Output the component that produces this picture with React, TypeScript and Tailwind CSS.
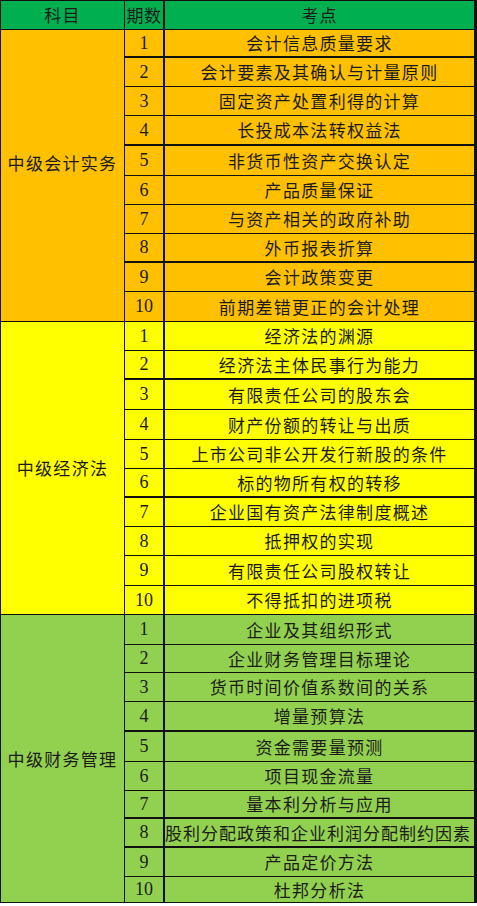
import React from "react";

type Section = {
  label: string;
  bg: string;
  labelPad: string;
  rows: string[];
  heights: number[];
  thick: number[];
  leftAlign?: number[];
};

const H: Record<number, string> = {
  25: "h-[25px]",
  26: "h-[26px]",
  27: "h-[27px]",
  28: "h-[28px]",
  29: "h-[29px]",
  30: "h-[30px]",
};

const sections: Section[] = [
  {
    label: "中级会计实务",
    bg: "bg-[#ffc000]",
    labelPad: "pb-[26px]",
    rows: [
      "会计信息质量要求",
      "会计要素及其确认与计量原则",
      "固定资产处置利得的计算",
      "长投成本法转权益法",
      "非货币性资产交换认定",
      "产品质量保证",
      "与资产相关的政府补助",
      "外币报表折算",
      "会计政策变更",
      "前期差错更正的会计处理",
    ],
    heights: [28, 29, 29, 30, 30, 29, 29, 29, 29, 29],
    thick: [0, 3, 7],
  },
  {
    label: "中级经济法",
    bg: "bg-[#ffff00]",
    labelPad: "pb-0",
    rows: [
      "经济法的渊源",
      "经济法主体民事行为能力",
      "有限责任公司的股东会",
      "财产份额的转让与出质",
      "上市公司非公开发行新股的条件",
      "标的物所有权的转移",
      "企业国有资产法律制度概述",
      "抵押权的实现",
      "有限责任公司股权转让",
      "不得抵扣的进项税",
    ],
    heights: [29, 29, 30, 30, 29, 29, 29, 29, 30, 28],
    thick: [1, 5],
  },
  {
    label: "中级财务管理",
    bg: "bg-[#92d050]",
    labelPad: "pb-0",
    rows: [
      "企业及其组织形式",
      "企业财务管理目标理论",
      "货币时间价值系数间的关系",
      "增量预算法",
      "资金需要量预测",
      "项目现金流量",
      "量本利分析与应用",
      "股利分配政策和企业利润分配制约因素",
      "产品定价方法",
      "杜邦分析法",
    ],
    heights: [30, 28, 29, 30, 30, 29, 28, 29, 29, 25],
    thick: [3, 6, 7],
    leftAlign: [7],
  },
];

const cjk = "font-['Noto_Sans_CJK_SC',sans-serif] text-[17px] tracking-[1.3px] text-[#1c1c1c]";
const num = "font-['Liberation_Serif',serif] text-[18px] text-[#1c1c1c]";

export default function App() {
  return (
    <div className="w-[477px] bg-white">
      <div className="w-[477px] border-t border-l border-r-[3px] border-[#111]">
        {/* header */}
        <div className="flex h-[29px] bg-[#00b050] border-b border-[#111]">
          <div className={`w-[124px] shrink-0 border-r border-[#111] flex items-center justify-center ${cjk}`}>
            科目
          </div>
          <div className="w-[40px] shrink-0 border-r-2 border-[#111] flex items-center justify-center overflow-hidden whitespace-nowrap font-['Noto_Sans_CJK_SC',sans-serif] text-[17px] tracking-[0.5px] text-[#1c1c1c]">
            期数
          </div>
          <div className={`flex-1 min-w-0 flex items-center justify-center ${cjk}`}>考点</div>
        </div>

        {sections.map((s) => (
          <div key={s.label} className={`flex border-b border-[#111] ${s.bg}`}>
            <div
              className={`w-[124px] shrink-0 border-r border-[#111] flex items-center justify-center ${s.labelPad} ${cjk}`}
            >
              {s.label}
            </div>
            <div className="flex-1 min-w-0 flex flex-col">
              {s.rows.map((r, i) => {
                const last = i === s.rows.length - 1;
                const b = last ? "" : s.thick.includes(i) ? "border-b-2 border-[#111]" : "border-b border-[#111]";
                const left = s.leftAlign?.includes(i);
                return (
                  <div key={r} className={`flex ${H[s.heights[i]]} ${b}`}>
                    <div className={`w-[40px] shrink-0 border-r-2 border-[#111] flex items-center justify-center ${num}`}>
                      {i + 1}
                    </div>
                    <div
                      className={`flex-1 min-w-0 flex items-center overflow-hidden whitespace-nowrap ${cjk} ${
                        left ? "justify-start pl-0 tracking-[1px]" : "justify-center"
                      }`}
                    >
                      {r}
                    </div>
                  </div>
                );
              })}
            </div>
          </div>
        ))}
      </div>
    </div>
  );
}
